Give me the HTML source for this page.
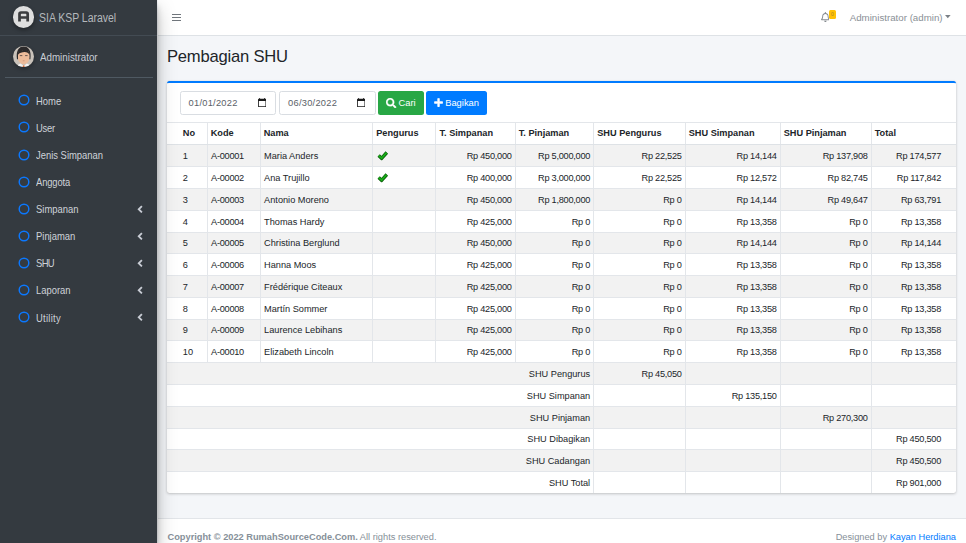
<!DOCTYPE html>
<html lang="en">
<head>
<meta charset="utf-8">
<title>Pembagian SHU</title>
<style>
*{box-sizing:border-box;margin:0;padding:0}
html,body{width:966px;height:543px;overflow:hidden}
body{position:relative;background:#f4f6f9;font-family:"Liberation Sans",sans-serif;color:#212529;font-size:9.4px}
.abs{position:absolute;white-space:nowrap}
/* sidebar */
#sidebar{position:absolute;left:0;top:0;width:157.4px;height:543px;background:#343a40;box-shadow:0 9px 18px rgba(0,0,0,.25),0 6px 6px rgba(0,0,0,.22);z-index:5}
#brand{position:absolute;left:0;top:0;width:157px;height:36px;border-bottom:1px solid #434b53}
#brand .logo{position:absolute;left:12.9px;top:6.4px;width:21.2px;height:21.2px;border-radius:50%;background:#dedede;box-shadow:0 2px 4px rgba(0,0,0,.4)}
#brand .txt{position:absolute;left:39px;top:8.8px;font-size:12px;color:#b4b8bc;line-height:18px;transform:scaleX(.872);transform-origin:0 0;white-space:nowrap}
#user .avatar{position:absolute;left:12.9px;top:45.8px;width:21.4px;height:21.4px;border-radius:50%;overflow:hidden;box-shadow:0 2px 4px rgba(0,0,0,.3)}
#user .txt{position:absolute;left:39.9px;top:50.1px;font-size:10.3px;color:#c8ccd4;line-height:16px;transform:scaleX(.95);transform-origin:0 0;white-space:nowrap}
#user .hr{position:absolute;left:5px;top:77px;width:147.5px;height:1px;background:#4f5962}
.nav{position:absolute;left:0;width:157px;height:27px}
.nav .ic{position:absolute;left:17.5px;top:7.1px;width:12px;height:12px}
.nav .lb{position:absolute;left:35.6px;top:6.3px;font-size:10.3px;line-height:16px;color:#ced2d9;transform:scaleX(.915);transform-origin:0 0}
.nav .ch{position:absolute;left:136.6px;top:8.8px;width:6.4px;height:8.5px}
/* navbar */
#navbar{position:absolute;left:157.5px;top:0;width:808.5px;height:36px;background:#fff;border-bottom:1px solid #dee2e6}
#burger{position:absolute;left:14.8px;top:13.7px;width:8.8px;height:8px}
#burger i{position:absolute;left:0;width:8.8px;height:1.1px;background:#70767c}
/* content */
#title{left:166.9px;top:44.2px;font-size:16.6px;line-height:26px;color:#212529;letter-spacing:-0.2px}
#card{position:absolute;left:167px;top:81px;width:789px;height:412px;background:#fff;border-top:2px solid #007bff;border-radius:2.5px;box-shadow:0 0 1px rgba(0,0,0,.125),0 1px 3px rgba(0,0,0,.2)}
.inp{position:absolute;top:8.3px;height:23.3px;width:96.2px;border:1px solid #d9dde2;border-radius:2.5px;background:#fff;font-size:9.3px;color:#5a6168;line-height:22px;padding-left:8px;letter-spacing:0.25px}
.inp svg{position:absolute;right:8.6px;top:5.6px;width:8.3px;height:9.2px}
.btn{position:absolute;top:8.2px;height:23.5px;border-radius:2.5px;color:#fff;font-size:9.35px;line-height:25px;text-align:center}
/* table */
table{position:absolute;left:0;top:39.4px;width:789px;border-collapse:collapse;table-layout:fixed;font-size:9.2px;color:#212529}
th,td{border:1px solid #e3e6ea;padding:0.8px 2.9px 0 3.6px;height:21.78px;overflow:hidden;white-space:nowrap;vertical-align:middle;line-height:12px}
th{text-align:left;font-weight:bold;height:21.2px;border-bottom:1.3px solid #dee2e6;font-size:9.2px;letter-spacing:0;padding:0 2px 0 3.2px}
tbody tr:first-child td{height:22.78px;padding-top:0.4px}
tr>*:first-child{border-left:none;padding-left:15.8px}
tr>*:last-child{border-right:none;padding-right:15px}
tbody tr:nth-child(odd){background:#f2f2f2}
tbody tr:last-child td{border-bottom:none}
.ck{display:block;margin-left:0;margin-top:0;transform:translate(0.2px,-0.5px)}
.r{text-align:right}
.n{text-align:right;letter-spacing:-0.26px}
.k{letter-spacing:-0.27px}
/* footer */
#footer{position:absolute;left:157.5px;top:518px;width:808.5px;height:25px;background:#fff;border-top:1px solid #e2e5e9;color:#869099;font-size:9.25px}
</style>
</head>
<body>

<div id="navbar">
  <div id="burger"><i style="top:0"></i><i style="top:3.2px"></i><i style="top:6.4px"></i></div>
  <svg class="abs" style="left:663px;top:12.3px;width:8.8px;height:10.1px" viewBox="0 0 448 512"><path fill="#868b90" d="M439.39 362.29c-19.32-20.76-55.47-51.99-55.47-154.29 0-77.7-54.48-139.9-127.94-155.16V32c0-17.67-14.32-32-31.98-32s-31.98 14.33-31.98 32v20.84C118.56 68.1 64.08 130.3 64.08 208c0 102.3-36.15 133.53-55.47 154.29-6 6.45-8.66 14.16-8.61 21.71.11 16.4 12.98 32 32.1 32h383.8c19.12 0 32-15.6 32.1-32 .05-7.55-2.61-15.27-8.61-21.71zM67.53 368c21.22-27.97 44.42-74.33 44.53-159.42 0-.2-.06-.38-.06-.58 0-61.86 50.14-112 112-112s112 50.14 112 112c0 .2-.06.38-.06.58.11 85.1 23.31 131.46 44.53 159.42H67.53zM224 512c35.32 0 63.97-28.65 63.97-64H160.03c0 35.35 28.65 64 63.97 64z"/></svg>
  <div class="abs" style="left:671.3px;top:10.3px;width:7.4px;height:8.4px;background:#ffc107;border-radius:1.5px;color:#a8852a;font-size:5px;line-height:8.4px;text-align:center">0</div>
  <div class="abs" style="left:692.2px;top:8.8px;font-size:9.72px;line-height:18px;color:#8a9096">Administrator (admin)</div>
  <svg class="abs" style="left:787.7px;top:15.4px;width:5.6px;height:3.3px" viewBox="0 0 5.6 3.3"><path d="M0 0 L5.6 0 L2.8 3.3Z" fill="#7a8086"/></svg>
</div>

<div id="sidebar">
  <div id="brand">
    <div class="logo">
      <svg viewBox="0 0.4 21 21" width="21.2" height="21.2"><path fill="#3b3c3e" fill-rule="evenodd" d="M5.1 8.3 Q5.1 5.5 7.9 5.5 L13.1 5.5 Q15.9 5.5 15.9 8.3 L15.9 15.8 L13.2 15.8 L13.2 13.0 L7.8 13.0 L7.8 15.8 L5.1 15.8 Z M7.8 8.7 L7.8 10.6 L13.2 10.6 L13.2 8.7 Q13.2 8.0 12.5 8.0 L8.5 8.0 Q7.8 8.0 7.8 8.7 Z"/></svg>
    </div>
    <div class="txt">SIA KSP Laravel</div>
  </div>
  <div id="user">
    <div class="avatar">
      <svg viewBox="0 0 21.4 21.4" width="21.4" height="21.4"><rect width="21.4" height="21.4" fill="#c9c2ba"/><path d="M4.0 13.2 C2.9 5.4 5.5 0.6 10.7 0.6 C15.9 0.6 18.5 5.4 17.4 13.2 L16.2 13.2 L16.2 8 L5.2 8 L5.2 13.2Z" fill="#2c2a2b"/><path d="M5.0 8.5 C5.0 5.5 7 4.6 10.7 4.6 C14.4 4.6 16.4 5.5 16.4 8.5 L16.4 12 C16.4 15.6 13.5 18.2 10.7 18.2 C7.9 18.2 5.0 15.6 5.0 12Z" fill="#edbc9b"/><path d="M4.6 9.2 C4.8 5 7 3.5 9.4 4.3 C12 3.1 16.4 3.9 16.8 9.2 C15.6 7 14 6.2 11.6 6.1 C9.2 6.1 6.4 6.8 4.6 9.2Z" fill="#2c2a2b"/><rect x="6.8" y="9.2" width="2.5" height="0.9" fill="#5a4a45"/><rect x="12.1" y="9.2" width="2.5" height="0.9" fill="#5a4a45"/><path d="M9.8 14.8 L11.6 14.8" stroke="#c98f72" stroke-width="0.7"/><path d="M3.0 21.4 C3.8 18.8 6.2 18 7.6 17.4 L10.7 20 L13.8 17.4 C15.2 18 17.6 18.8 18.4 21.4Z" fill="#f4f4f4"/><path d="M10.0 19.4 L11.4 19.4 L11.9 21.4 L9.5 21.4Z" fill="#d8622a"/></svg>
    </div>
    <div class="txt">Administrator</div>
    <div class="hr"></div>
  </div>
  <div class="nav" style="top:87.25px"><svg class="ic" viewBox="0 0 12 12"><circle cx="6" cy="6" r="4.8" stroke="#0b78ff" stroke-width="1.45" fill="none"/></svg><div class="lb">Home</div></div>
  <div class="nav" style="top:114.37px"><svg class="ic" viewBox="0 0 12 12"><circle cx="6" cy="6" r="4.8" stroke="#0b78ff" stroke-width="1.45" fill="none"/></svg><div class="lb" style="letter-spacing:-0.3px">User</div></div>
  <div class="nav" style="top:141.49px"><svg class="ic" viewBox="0 0 12 12"><circle cx="6" cy="6" r="4.8" stroke="#0b78ff" stroke-width="1.45" fill="none"/></svg><div class="lb">Jenis Simpanan</div></div>
  <div class="nav" style="top:168.61px"><svg class="ic" viewBox="0 0 12 12"><circle cx="6" cy="6" r="4.8" stroke="#0b78ff" stroke-width="1.45" fill="none"/></svg><div class="lb" style="letter-spacing:-0.15px">Anggota</div></div>
  <div class="nav" style="top:195.73px"><svg class="ic" viewBox="0 0 12 12"><circle cx="6" cy="6" r="4.8" stroke="#0b78ff" stroke-width="1.45" fill="none"/></svg><div class="lb">Simpanan</div><svg class="ch" viewBox="0 0 6 8"><path d="M4.6 1 L1.6 4 L4.6 7" stroke="#c8ccd4" stroke-width="1.7" fill="none"/></svg></div>
  <div class="nav" style="top:222.85px"><svg class="ic" viewBox="0 0 12 12"><circle cx="6" cy="6" r="4.8" stroke="#0b78ff" stroke-width="1.45" fill="none"/></svg><div class="lb">Pinjaman</div><svg class="ch" viewBox="0 0 6 8"><path d="M4.6 1 L1.6 4 L4.6 7" stroke="#c8ccd4" stroke-width="1.7" fill="none"/></svg></div>
  <div class="nav" style="top:249.97px"><svg class="ic" viewBox="0 0 12 12"><circle cx="6" cy="6" r="4.8" stroke="#0b78ff" stroke-width="1.45" fill="none"/></svg><div class="lb" style="letter-spacing:-0.7px">SHU</div><svg class="ch" viewBox="0 0 6 8"><path d="M4.6 1 L1.6 4 L4.6 7" stroke="#c8ccd4" stroke-width="1.7" fill="none"/></svg></div>
  <div class="nav" style="top:277.09px"><svg class="ic" viewBox="0 0 12 12"><circle cx="6" cy="6" r="4.8" stroke="#0b78ff" stroke-width="1.45" fill="none"/></svg><div class="lb">Laporan</div><svg class="ch" viewBox="0 0 6 8"><path d="M4.6 1 L1.6 4 L4.6 7" stroke="#c8ccd4" stroke-width="1.7" fill="none"/></svg></div>
  <div class="nav" style="top:304.21px"><svg class="ic" viewBox="0 0 12 12"><circle cx="6" cy="6" r="4.8" stroke="#0b78ff" stroke-width="1.45" fill="none"/></svg><div class="lb" style="letter-spacing:0.3px">Utility</div><svg class="ch" viewBox="0 0 6 8"><path d="M4.6 1 L1.6 4 L4.6 7" stroke="#c8ccd4" stroke-width="1.7" fill="none"/></svg></div>
</div>

<div id="title" class="abs">Pembagian SHU</div>

<div id="card">
  <div class="inp" style="left:12.6px">01/01/2022<svg viewBox="2 1 20 22"><path fill="#1b1b1b" d="M20 3h-1V1h-2v2H7V1H5v2H4c-1.100 0-2 .900-2 2v16c0 1.100.900 2 2 2h16c1.100 0 2-.900 2-2V5c0-1.100-.900-2-2-2zm0 18H4V8h16v13z"/></svg></div>
  <div class="inp" style="left:112.1px;width:96.7px">06/30/2022<svg style="right:9.5px" viewBox="2 1 20 22"><path fill="#1b1b1b" d="M20 3h-1V1h-2v2H7V1H5v2H4c-1.100 0-2 .900-2 2v16c0 1.100.900 2 2 2h16c1.100 0 2-.900 2-2V5c0-1.100-.900-2-2-2zm0 18H4V8h16v13z"/></svg></div>
  <div class="btn" style="left:211.1px;width:45.6px;background:#28a745">
    <svg style="position:absolute;left:8.3px;top:6.7px;width:10.2px;height:10.2px" viewBox="0 0 512 512"><path fill="#fff" stroke="#fff" stroke-width="14" d="M505 442.700L405.300 343c-4.500-4.500-10.600-7-17-7H372c27.600-35.300 44-79.700 44-128C416 93.100 322.900 0 208 0S0 93.100 0 208s93.100 208 208 208c48.300 0 92.700-16.400 128-44v16.300c0 6.400 2.500 12.500 7 17l99.700 99.700c9.400 9.400 24.600 9.400 33.900 0l28.300-28.300c9.400-9.400 9.400-24.600.1-34zM208 336c-70.700 0-128-57.200-128-128 0-70.700 57.200-128 128-128 70.700 0 128 57.200 128 128 0 70.700-57.200 128-128 128z"/></svg>
    <span style="position:absolute;left:20.4px;top:0">Cari</span>
  </div>
  <div class="btn" style="left:259.2px;width:60.7px;background:#007bff">
    <svg style="position:absolute;left:8px;top:7px;width:9.1px;height:9.1px" viewBox="-10 -10 468 468"><path fill="#fff" stroke="#fff" stroke-width="26" d="M416 176H272V32c0-17.700-14.300-32-32-32h-32c-17.700 0-32 14.300-32 32v144H32c-17.700 0-32 14.300-32 32v32c0 17.700 14.300 32 32 32h144v144c0 17.700 14.300 32 32 32h32c17.700 0 32-14.300 32-32V272h144c17.700 0 32-14.300 32-32v-32c0-17.700-14.300-32-32-32z"/></svg>
    <span style="position:absolute;left:19px;top:0">Bagikan</span>
  </div>

  <table>
    <colgroup><col style="width:40px"><col style="width:53px"><col style="width:112.5px"><col style="width:63.25px"><col style="width:79.25px"><col style="width:78.5px"><col style="width:91.5px"><col style="width:95px"><col style="width:91px"><col style="width:85px"></colgroup>
    <thead><tr><th>No</th><th>Kode</th><th>Nama</th><th>Pengurus</th><th>T. Simpanan</th><th>T. Pinjaman</th><th>SHU Pengurus</th><th>SHU Simpanan</th><th>SHU Pinjaman</th><th>Total</th></tr></thead>
    <tbody>
      <tr><td>1</td><td class="k">A-00001</td><td>Maria Anders</td><td><svg class="ck" viewBox="0 0 11 10" width="11" height="10"><path d="M1.4 5.0 L4.4 7.8 L9.6 2.0" stroke="#0c5c0c" stroke-width="3.4" fill="none" stroke-linejoin="miter"/><path d="M1.6 5.1 L4.4 7.7 L9.4 2.2" stroke="#18ac18" stroke-width="1.9" fill="none" stroke-linejoin="miter"/></svg></td><td class="n">Rp 450,000</td><td class="n">Rp 5,000,000</td><td class="n">Rp 22,525</td><td class="n">Rp 14,144</td><td class="n">Rp 137,908</td><td class="n">Rp 174,577</td></tr>
      <tr><td>2</td><td class="k">A-00002</td><td>Ana Trujillo</td><td><svg class="ck" viewBox="0 0 11 10" width="11" height="10"><path d="M1.4 5.0 L4.4 7.8 L9.6 2.0" stroke="#0c5c0c" stroke-width="3.4" fill="none" stroke-linejoin="miter"/><path d="M1.6 5.1 L4.4 7.7 L9.4 2.2" stroke="#18ac18" stroke-width="1.9" fill="none" stroke-linejoin="miter"/></svg></td><td class="n">Rp 400,000</td><td class="n">Rp 3,000,000</td><td class="n">Rp 22,525</td><td class="n">Rp 12,572</td><td class="n">Rp 82,745</td><td class="n">Rp 117,842</td></tr>
      <tr><td>3</td><td class="k">A-00003</td><td>Antonio Moreno</td><td></td><td class="n">Rp 450,000</td><td class="n">Rp 1,800,000</td><td class="n">Rp 0</td><td class="n">Rp 14,144</td><td class="n">Rp 49,647</td><td class="n">Rp 63,791</td></tr>
      <tr><td>4</td><td class="k">A-00004</td><td>Thomas Hardy</td><td></td><td class="n">Rp 425,000</td><td class="n">Rp 0</td><td class="n">Rp 0</td><td class="n">Rp 13,358</td><td class="n">Rp 0</td><td class="n">Rp 13,358</td></tr>
      <tr><td>5</td><td class="k">A-00005</td><td>Christina Berglund</td><td></td><td class="n">Rp 450,000</td><td class="n">Rp 0</td><td class="n">Rp 0</td><td class="n">Rp 14,144</td><td class="n">Rp 0</td><td class="n">Rp 14,144</td></tr>
      <tr><td>6</td><td class="k">A-00006</td><td>Hanna Moos</td><td></td><td class="n">Rp 425,000</td><td class="n">Rp 0</td><td class="n">Rp 0</td><td class="n">Rp 13,358</td><td class="n">Rp 0</td><td class="n">Rp 13,358</td></tr>
      <tr><td>7</td><td class="k">A-00007</td><td>Frédérique Citeaux</td><td></td><td class="n">Rp 425,000</td><td class="n">Rp 0</td><td class="n">Rp 0</td><td class="n">Rp 13,358</td><td class="n">Rp 0</td><td class="n">Rp 13,358</td></tr>
      <tr><td>8</td><td class="k">A-00008</td><td>Martín Sommer</td><td></td><td class="n">Rp 425,000</td><td class="n">Rp 0</td><td class="n">Rp 0</td><td class="n">Rp 13,358</td><td class="n">Rp 0</td><td class="n">Rp 13,358</td></tr>
      <tr><td>9</td><td class="k">A-00009</td><td>Laurence Lebihans</td><td></td><td class="n">Rp 425,000</td><td class="n">Rp 0</td><td class="n">Rp 0</td><td class="n">Rp 13,358</td><td class="n">Rp 0</td><td class="n">Rp 13,358</td></tr>
      <tr><td>10</td><td class="k">A-00010</td><td>Elizabeth Lincoln</td><td></td><td class="n">Rp 425,000</td><td class="n">Rp 0</td><td class="n">Rp 0</td><td class="n">Rp 13,358</td><td class="n">Rp 0</td><td class="n">Rp 13,358</td></tr>
      <tr><td colspan="6" class="r">SHU Pengurus</td><td class="n">Rp 45,050</td><td></td><td></td><td></td></tr>
      <tr><td colspan="6" class="r">SHU Simpanan</td><td></td><td class="n">Rp 135,150</td><td></td><td></td></tr>
      <tr><td colspan="6" class="r">SHU Pinjaman</td><td></td><td></td><td class="n">Rp 270,300</td><td></td></tr>
      <tr><td colspan="6" class="r">SHU Dibagikan</td><td></td><td></td><td></td><td class="n">Rp 450,500</td></tr>
      <tr><td colspan="6" class="r">SHU Cadangan</td><td></td><td></td><td></td><td class="n">Rp 450,500</td></tr>
      <tr><td colspan="6" class="r">SHU Total</td><td></td><td></td><td></td><td class="n">Rp 901,000</td></tr>
    </tbody>
  </table>
</div>

<div id="footer">
  <div class="abs" style="left:10px;top:10.9px;line-height:14px"><b>Copyright © 2022 RumahSourceCode.Com.</b> All rights reserved.</div>
  <div class="abs" style="right:10px;top:10.9px;line-height:14px">Designed by <span style="color:#007bff">Kayan Herdiana</span></div>
</div>

</body>
</html>
